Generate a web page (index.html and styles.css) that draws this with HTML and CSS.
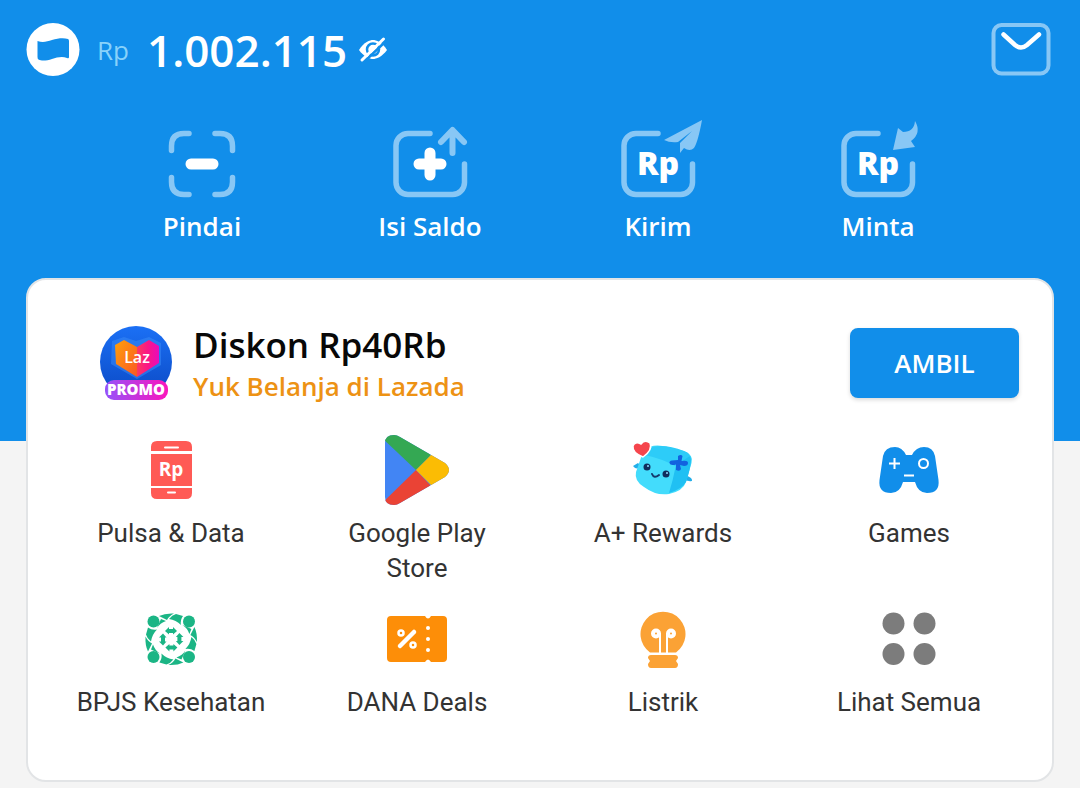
FILE: index.html
```html
<!DOCTYPE html>
<html lang="id">
<head>
<meta charset="utf-8">
<meta name="viewport" content="width=device-width, initial-scale=1">
<title>Dompet</title>
<link rel="stylesheet" href="styles.css">
</head>
<body>
<header class="header">
  <div class="topbar">
    <svg class="logo" width="54" height="54" viewBox="0 0 54 54" aria-hidden="true">
      <circle cx="27" cy="26.500" r="26.500" fill="#fff"/>
      <path d="M11.500 18C17 20 21 18.500 26 17C32 15 38 14.500 42 16Q43 16.500 43 18V34Q43 36 41 35C36 33 31 34.500 26 36C21 37.500 16 38.500 12.500 36.500Q11.500 36 11.500 34Z" fill="#118eea"/>
    </svg>
    <span class="currency">Rp</span>
    <span class="balance">1.002.115</span>
    <button class="icon-button" type="button" aria-label="Sembunyikan saldo">
      <svg width="32" height="28" viewBox="0 0 32 28">
        <path d="M2 14C7 6 13 4 16 4S25 6 30 14C25 21 19 23 16 23S7 21 2 14Z" fill="#fff"/>
        <circle cx="16" cy="13.500" r="6" fill="none" stroke="#118eea" stroke-width="2.500"/>
        <path d="M8 25L29 5" stroke="#118eea" stroke-width="2.500"/>
        <path d="M5 24L26.500 3" stroke="#fff" stroke-width="3" stroke-linecap="round"/>
      </svg>
    </button>
    <button class="icon-button inbox" type="button" aria-label="Kotak masuk">
      <svg width="60" height="54" viewBox="0 0 60 54">
        <rect x="2.500" y="2" width="55" height="48.500" rx="8" fill="none" stroke="#88c7f5" stroke-width="4"/>
        <path d="M12.500 11.500L24 22Q30 27 36 22L48 11.500" fill="none" stroke="#fff" stroke-width="4.500" stroke-linecap="round"/>
      </svg>
    </button>
  </div>
  <nav class="actions" aria-label="Aksi cepat">
    <a class="action" href="#pindai">
      <svg width="92" height="80" viewBox="156 120 92 80">
        <path d="M171.500 150.500V146Q171.500 133.500 184 133.500H189M215 133.500H220Q232.500 133.500 232.500 146V150.500M232.500 177.500V182Q232.500 194.500 220 194.500H215M189 194.500H184Q171.500 194.500 171.500 182V177.500" fill="none" stroke="#88c7f5" stroke-width="5.500" stroke-linecap="round"/>
        <path d="M191 164H213" stroke="#fff" stroke-width="11" stroke-linecap="round"/>
      </svg>
      <span>Pindai</span>
    </a>
    <a class="action" href="#isi-saldo">
      <svg width="92" height="80" viewBox="384 120 92 80">
        <path d="M430 133.500H408A12 12 0 0 0 396 145.500V182.500A12 12 0 0 0 408 194.500H452.500A12 12 0 0 0 464.500 182.500V164" fill="none" stroke="#88c7f5" stroke-width="5.500" stroke-linecap="round"/>
        <path d="M441 142L452.500 130L464 142M452.500 131V153" fill="none" stroke="#88c7f5" stroke-width="6" stroke-linecap="round" stroke-linejoin="round"/>
        <path d="M419 164H441M430 153V175" stroke="#fff" stroke-width="11" stroke-linecap="round"/>
      </svg>
      <span>Isi Saldo</span>
    </a>
    <a class="action" href="#kirim">
      <svg width="92" height="80" viewBox="612 120 92 80">
        <path d="M658 133.500H636A12 12 0 0 0 624 145.500V182.500A12 12 0 0 0 636 194.500H680.500A12 12 0 0 0 692.500 182.500V164" fill="none" stroke="#88c7f5" stroke-width="5.500" stroke-linecap="round"/>
        <path d="M702 120L664 140Q670 143 678 142L692 131L680 143V153L684 148Q690 152 694 148Q698 142 702 120Z" fill="#88c7f5"/>
        <text class="icon-rp" x="658" y="175" text-anchor="middle">Rp</text>
      </svg>
      <span>Kirim</span>
    </a>
    <a class="action" href="#minta">
      <svg width="92" height="80" viewBox="832 120 92 80">
        <path d="M878 133.500H856A12 12 0 0 0 844 145.500V182.500A12 12 0 0 0 856 194.500H900.500A12 12 0 0 0 912.500 182.500V164" fill="none" stroke="#88c7f5" stroke-width="5.500" stroke-linecap="round"/>
        <path d="M893 150L898 128L903 132Q914 132 915 121Q922 133 911 141L915 147Z" fill="#88c7f5"/>
        <text class="icon-rp" x="878" y="175" text-anchor="middle">Rp</text>
      </svg>
      <span>Minta</span>
    </a>
  </nav>
</header>
<main class="card">
  <section class="promo">
    <svg class="promo-logo" width="74" height="76" viewBox="99 325 74 76" role="img" aria-label="Laz Promo">
      <defs>
        <linearGradient id="disc" x2="0" y2="1"><stop stop-color="#1b70f5"/><stop offset="1" stop-color="#0b49c4"/></linearGradient>
        <linearGradient id="left" x2="1" y2="1"><stop stop-color="#ffa00a"/><stop offset="1" stop-color="#fa5824"/></linearGradient>
        <linearGradient id="right" x2="1"><stop stop-color="#fb3a60"/><stop offset=".5" stop-color="#fb1687"/><stop offset="1" stop-color="#e80bbc"/></linearGradient>
        <linearGradient id="pill" x2="1"><stop stop-color="#9551fa"/><stop offset="1" stop-color="#fb16bd"/></linearGradient>
      </defs>
      <circle cx="136" cy="362" r="36" fill="url(#disc)"/>
      <path d="M112 341L124 337L136 341L149 337L161 343V365L137 379L111 364Z" fill="#3988f5" opacity=".55"/>
      <path d="M115 345L124 340L137 347V377L116 364Z" fill="url(#left)"/>
      <path d="M137 347L149 340L159 346V363L137 377Z" fill="url(#right)"/>
      <text class="laz" x="137" y="363" text-anchor="middle">Laz</text>
      <rect x="105" y="380" width="63" height="20" rx="9" fill="url(#pill)"/>
      <text class="promo-tag" x="136" y="395" text-anchor="middle">PROMO</text>
    </svg>
    <div class="promo-text">
      <h1 class="promo-title">Diskon Rp40Rb</h1>
      <p class="promo-sub">Yuk Belanja di Lazada</p>
    </div>
    <button class="claim" type="button">AMBIL</button>
  </section>
  <nav class="services" aria-label="Layanan">
    <a class="service" href="#pulsa">
      <svg width="76" height="76" viewBox="133 432 76 76">
        <path d="M151 451V447Q151 441 157 441H186Q192 441 192 447V451ZM151 454H192V486H151ZM151 488H192V493Q192 499 186 499H157Q151 499 151 493Z" fill="#ff5a55"/>
        <path d="M165 447.500H178M168 492.500H175" stroke="#fff" stroke-width="2" stroke-linecap="round"/>
        <text class="phone-rp" x="171" y="476" text-anchor="middle">Rp</text>
      </svg>
      <span>Pulsa &amp; Data</span>
    </a>
    <a class="service" href="#google-play">
      <svg width="76" height="76" viewBox="379 432 76 76">
        <clipPath id="play"><path d="M385 443Q385 435 394 435Q397 435 400 437L445 463Q453 470 445 477L400 503Q397 505 394 505Q385 505 385 497Z"/></clipPath>
        <g clip-path="url(#play)">
          <path d="M380 430H460V510H380Z" fill="#4285f4"/>
          <path d="M380 436V430H440L430 456L416 470Z" fill="#34a853"/>
          <path d="M380 505V510H440L430 485L416 470Z" fill="#ea4335"/>
          <path d="M416 470L434 452L460 460V480L434 488Z" fill="#fbbc04"/>
        </g>
      </svg>
      <span>Google Play Store</span>
    </a>
    <a class="service" href="#rewards">
      <svg width="76" height="76" viewBox="625 432 76 76">
        <path d="M638 463L633 466Q637 471 641 466ZM686 475L691 478Q694 482 689 481L683 480Z" fill="#22aee9"/>
        <path d="M644 449Q654 443 668 447L684 451Q694 455 691.500 463L686 482Q683 491 669 494Q656 496 644 487Q634 481 636 472Z" fill="#43dcfc"/>
        <path d="M649 448Q663 443 684 451Q692 454 689 458Q680 461 675 466Q663 459 645 455Z" fill="#2dccf8"/>
        <path d="M690 456Q693 461 686 482Q682 489 669 493Q673 480 676 465Z" fill="#20c0f3"/>
        <path d="M678 456Q681 454 682.500 456L681.500 461Q688 460 688 463Q688 466 684 466L680 465L681 469Q680 472 676 470L676 464.500Q670 466 669.500 463Q669 461 672 460.500L678 460Z" fill="#1262df"/>
        <circle cx="647" cy="467" r="3.500" fill="#102d5d"/><circle cx="666" cy="474" r="3.500" fill="#102d5d"/>
        <circle cx="648" cy="466" r="1" fill="#8bdcff"/><circle cx="667" cy="473" r="1" fill="#8bdcff"/>
        <path d="M652 474Q654 479 659 475" fill="none" stroke="#14386b" stroke-width="2" stroke-linecap="round"/>
        <path d="M643 457Q632 453 633 446Q635 441 641 444Q645 439 650 443Q653 450 643 457Z" fill="#f5454c" stroke="#fff" stroke-width="1.500"/>
      </svg>
      <span>A+ Rewards</span>
    </a>
    <a class="service" href="#games">
      <svg width="76" height="76" viewBox="871 432 76 76">
        <path d="M883 456Q885 447 895 447Q902 447 906 455H912Q916 447 924 447Q933 447 935 456L938.500 480Q940 493 927 493Q918 493 915 482H903Q900 493 891 493Q878 493 879.500 480Z" fill="#118eea"/>
        <path d="M889 463.500H900M894.500 458V469M904 475.500H914" stroke="#fff" stroke-width="2"/>
        <circle cx="923.500" cy="463.500" r="4.500" fill="none" stroke="#fff" stroke-width="2"/>
      </svg>
      <span>Games</span>
    </a>
    <a class="service" href="#bpjs">
      <svg width="76" height="76" viewBox="133 601 76 76">
        <g fill="#1bb585">
          <circle cx="153.500" cy="621.500" r="6"/><circle cx="189" cy="621.500" r="6"/><circle cx="153.500" cy="657" r="6"/><circle cx="189" cy="657" r="6"/>
          <g id="bpjs-side">
            <path d="M159 616Q165 613 174 613.500Q169 616 167 620Q163 618 159 616Z"/>
            <path d="M176 614L183 616Q180 620 181 625Q176 620 169 619Q172 615 176 614Z"/>
            <path d="M161 619L166 621Q160 623 157 628Q159 623 161 619Z"/>
            <path d="M165 631L169 627V629H173V627L177 631L173 634.500V633H169V634.500Z"/>
          </g>
          <use href="#bpjs-side" transform="rotate(90 171.200 639.200)"/>
          <use href="#bpjs-side" transform="rotate(180 171.200 639.200)"/>
          <use href="#bpjs-side" transform="rotate(270 171.200 639.200)"/>
        </g>
      </svg>
      <span>BPJS Kesehatan</span>
    </a>
    <a class="service" href="#deals">
      <svg width="76" height="76" viewBox="379 601 76 76">
        <path d="M391 616H425Q428 621 431 616H443Q447 616 447 620V658Q447 662 443 662H431Q428 657 425 662H391Q387 662 387 658V620Q387 616 391 616Z" fill="#fd8e08"/>
        <path d="M400 646L414 632" stroke="#fff" stroke-width="4.500" stroke-linecap="round"/>
        <g fill="none" stroke="#fff" stroke-width="2.500"><circle cx="401" cy="633" r="2.500"/><circle cx="413" cy="645" r="2.500"/></g>
        <g fill="#fff"><circle cx="428" cy="628" r="2"/><circle cx="428" cy="639" r="2"/><circle cx="428" cy="650" r="2"/></g>
      </svg>
      <span>DANA Deals</span>
    </a>
    <a class="service" href="#listrik">
      <svg width="76" height="76" viewBox="625 601 76 76">
        <path d="M650 652.500A22.500 22.500 0 1 1 676 652.500ZM651 655H675Q678 655 678 658L676 661L678 664Q678 668 675 668H651Q648 668 648 664L650 661L648 658Q648 655 651 655Z" fill="#fba235"/>
        <path d="M660 653V633M667 653V633" stroke="#fff" stroke-width="2"/>
        <circle cx="656" cy="633.500" r="3" fill="none" stroke="#fff" stroke-width="4"/>
        <circle cx="671" cy="633.500" r="3" fill="none" stroke="#fff" stroke-width="4"/>
      </svg>
      <span>Listrik</span>
    </a>
    <a class="service" href="#semua">
      <svg width="76" height="76" viewBox="871 601 76 76" fill="#7c7c7c">
        <circle cx="893.500" cy="623.500" r="11"/><circle cx="924.500" cy="623.500" r="11"/><circle cx="893.500" cy="654" r="11"/><circle cx="924.500" cy="654" r="11"/>
      </svg>
      <span>Lihat Semua</span>
    </a>
  </nav>
</main>
</body>
</html>
```
FILE: styles.css
```css
* { box-sizing: border-box; }

body {
  margin: 0;
  background: #f4f4f4;
  font-family: "Open Sans", "Noto Sans", sans-serif;
  font-weight: 600;
}

svg { display: block; flex: none; }
a { color: inherit; text-decoration: none; }
button { font: inherit; border: 0; cursor: pointer; }

.header {
  padding-bottom: 196px;
  background: #118eea;
  color: #fff;
}

.topbar {
  display: flex;
  align-items: center;
  height: 100px;
  padding: 0 29px 0 26px;
}

.currency {
  margin-left: 17px;
  font-size: 26px;
  font-weight: 500;
  color: #88d2fa;
}

.balance {
  margin-left: 18px;
  font-size: 44px;
  line-height: 60px;
}

.icon-button {
  margin-left: 10px;
  padding: 0;
  background: none;
}

.inbox { margin-left: auto; }

.actions {
  display: grid;
  grid-template-columns: 57fr 57fr 57fr 53fr;
  padding: 20px 96px 0 88px;
}

.action {
  display: flex;
  flex-direction: column;
  align-items: center;
  gap: 8px;
  font-size: 26px;
  line-height: 37px;
}

.icon-rp {
  font-size: 32px;
  font-weight: 800;
  fill: #fff;
}

.card {
  margin: -163px 26px 6px;
  padding: 42px 20px 60px;
  border: 2px solid #e2e4e6;
  border-radius: 20px;
  background: #fff;
}

.promo {
  display: flex;
  align-items: center;
  padding: 0 13px 0 51px;
}

.promo-text { margin: 0 auto 0 20px; }

.promo-title {
  margin: 0;
  font-size: 35px;
  font-weight: 600;
  line-height: 46px;
  color: #080808;
}

.promo-sub {
  margin: 0;
  font-size: 26px;
  line-height: 36px;
  color: #ed9214;
}

.laz {
  font-size: 16px;
  fill: #fff;
}

.promo-tag {
  font-size: 15px;
  font-weight: 800;
  fill: #fff;
}

.claim {
  width: 169px;
  height: 70px;
  border-radius: 8px;
  background: #118eea;
  box-shadow: 0 2px 4px rgba(0, 0, 0, 0.15);
  font-size: 26px;
  color: #fff;
}

.services {
  display: grid;
  grid-template-columns: repeat(4, 1fr);
  row-gap: 15px;
  padding-top: 28px;
}

.service {
  display: flex;
  flex-direction: column;
  align-items: center;
  gap: 8px;
  padding: 0 28px;
  font-family: Roboto, sans-serif;
  font-size: 26px;
  font-weight: 400;
  line-height: 35px;
  text-align: center;
  color: #333;
}

.service:nth-child(4n + 1) { padding: 0; }

.phone-rp {
  font-family: "Open Sans", sans-serif;
  font-size: 19px;
  font-weight: 700;
  fill: #fff;
}
```
